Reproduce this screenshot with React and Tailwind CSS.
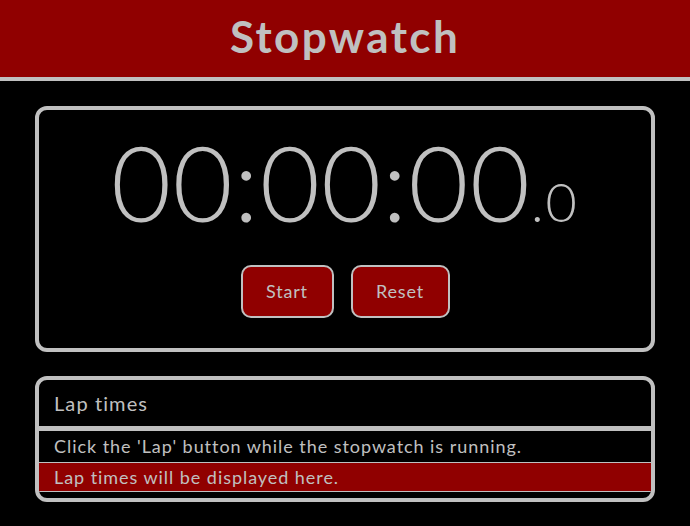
export default function App() {
  return (
    <div className="min-h-screen bg-black text-[#c0c0c0]" style={{ fontFamily: 'Lato, "Open Sans", sans-serif' }}>
      {/* Header */}
      <header className="h-[81px] bg-[#900000] border-b-4 border-[#c0c0c0] flex items-center justify-center pb-[5px]">
        <h1 className="text-[44px] font-bold tracking-[2.4px]">Stopwatch</h1>
      </header>

      {/* Clock */}
      <section className="mx-[35px] mt-[25px] border-4 border-[#c0c0c0] rounded-[12px] pt-[20px] pb-[30px]">
        <div className="text-center font-light leading-none text-[104px] tracking-[1px]">
          00:00:00<span className="text-[54px] tracking-[2px]">.0</span>
        </div>
        <div className="mt-[31px] flex justify-center gap-[17px]">
          <button className="h-[53px] w-[93px] bg-[#900000] border-2 border-[#c0c0c0] rounded-[10px] text-[18px] tracking-[0.8px]">
            Start
          </button>
          <button className="h-[53px] w-[99px] bg-[#900000] border-2 border-[#c0c0c0] rounded-[10px] text-[18px] tracking-[0.8px]">
            Reset
          </button>
        </div>
      </section>

      {/* Lap times */}
      <section className="mx-[35px] mt-[24px] border-4 border-[#c0c0c0] rounded-[12px] overflow-hidden pb-[6px]">
        <div className="h-[51px] flex items-center px-[15px] text-[20px] tracking-[1.1px] border-b-[5px] border-[#c0c0c0]">
          Lap times
        </div>
        <div className="h-[32px] flex items-center px-[15px] text-[18px] tracking-[0.95px] border-b border-[#c0c0c0]">
          Click the 'Lap' button while the stopwatch is running.
        </div>
        <div className="h-[29px] flex items-center px-[15px] text-[18px] tracking-[0.95px] bg-[#900000] border-b border-[#c0c0c0]">
          Lap times will be displayed here.
        </div>
      </section>
    </div>
  )
}
